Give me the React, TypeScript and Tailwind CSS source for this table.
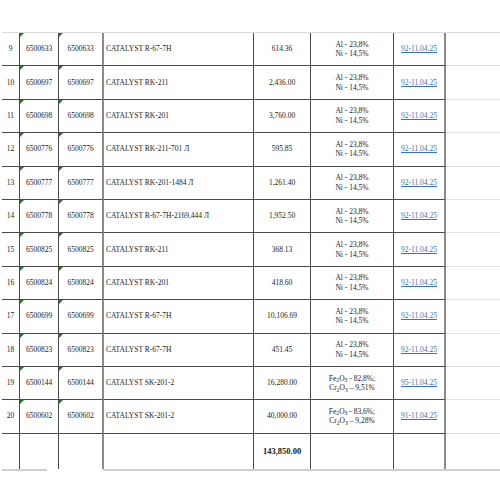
import React from 'react';

type Row = {
  n: number;
  code: string;
  name: string;
  amount: string;
  comp: 'ni' | 'fe1' | 'fe2';
  doc: string;
};

const rows: Row[] = [
  { n: 9, code: '6500633', name: 'CATALYST R-67-7H', amount: '614.36', comp: 'ni', doc: '92-11.04.25' },
  { n: 10, code: '6500697', name: 'CATALYST RK-211', amount: '2,436.00', comp: 'ni', doc: '92-11.04.25' },
  { n: 11, code: '6500698', name: 'CATALYST RK-201', amount: '3,760.00', comp: 'ni', doc: '92-11.04.25' },
  { n: 12, code: '6500776', name: 'CATALYST RK-211-701 Л', amount: '595.85', comp: 'ni', doc: '92-11.04.25' },
  { n: 13, code: '6500777', name: 'CATALYST RK-201-1484 Л', amount: '1,261.40', comp: 'ni', doc: '92-11.04.25' },
  { n: 14, code: '6500778', name: 'CATALYST R-67-7H-2169,444 Л', amount: '1,952.50', comp: 'ni', doc: '92-11.04.25' },
  { n: 15, code: '6500825', name: 'CATALYST RK-211', amount: '368.13', comp: 'ni', doc: '92-11.04.25' },
  { n: 16, code: '6500824', name: 'CATALYST RK-201', amount: '418.60', comp: 'ni', doc: '92-11.04.25' },
  { n: 17, code: '6500699', name: 'CATALYST R-67-7H', amount: '10,106.69', comp: 'ni', doc: '92-11.04.25' },
  { n: 18, code: '6500823', name: 'CATALYST R-67-7H', amount: '451.45', comp: 'ni', doc: '92-11.04.25' },
  { n: 19, code: '6500144', name: 'CATALYST SK-201-2', amount: '16,280.00', comp: 'fe1', doc: '95-11.04.25' },
  { n: 20, code: '6500602', name: 'CATALYST SK-201-2', amount: '40,000.00', comp: 'fe2', doc: '91-11.04.25' },
];

function Marker() {
  return (
    <span className="absolute left-0 top-0 w-0 h-0 border-t-[4px] border-r-[4px] border-t-[#217a21] border-r-transparent" />
  );
}

function Composition({ kind }: { kind: Row['comp'] }) {
  if (kind === 'ni') {
    return (
      <>
        <div>Al - 23,8%</div>
        <div>Ni - 14,5%</div>
      </>
    );
  }
  const fe = kind === 'fe1' ? '82,8%;' : '83,6%;';
  const cr = kind === 'fe1' ? '9,51%' : '9,28%';
  return (
    <>
      <div>
        Fe<sub>2</sub>O<sub>3</sub> - {fe}
      </div>
      <div>
        Cr<sub>2</sub>O<sub>3</sub> – {cr}
      </div>
    </>
  );
}

const cols = 'grid grid-cols-[18px_39px_45px_150px_57px_83px_52px_1fr]';

export default function App() {
  return (
    <div className="w-[500px] h-[500px] bg-white overflow-hidden text-[#1a1a1a] text-[7.5px] leading-[10px] font-['Liberation_Serif',serif]">
      <div className="h-[32px]" />
      <div className="ml-[2px] border-t border-[#dcdcdc]">
        {rows.map((r) => (
          <div key={r.n} className={`${cols} h-[33.4px]`}>
            <div className="flex items-center justify-center border-r border-b border-[#4a4a4a]">{r.n}</div>
            <div className="relative flex items-center justify-center border-r border-b border-[#4a4a4a]">
              <Marker />
              {r.code}
            </div>
            <div className="relative flex items-center justify-center border-r-2 border-r-[#8a8a8a] border-b border-b-[#4a4a4a]">
              <Marker />
              {r.code}
            </div>
            <div className="flex items-center pl-[2px] border-r border-b border-[#4a4a4a] whitespace-nowrap">{r.name}</div>
            <div className="flex items-center justify-center border-r border-b border-[#4a4a4a]">{r.amount}</div>
            <div className="flex flex-col items-center justify-center border-r border-b border-[#4a4a4a] leading-[9.5px]">
              <Composition kind={r.comp} />
            </div>
            <div className="flex items-center justify-center border-r-2 border-r-[#8a8a8a] border-b border-b-[#4a4a4a]">
              <span className="text-[#3d72b8] underline">{r.doc}</span>
            </div>
            <div className="border-b border-[#e3e3e3]" />
          </div>
        ))}
        <div className={`${cols} h-[35px]`}>
          <div className="border-r border-[#4a4a4a]" />
          <div className="border-r border-[#4a4a4a]" />
          <div className="border-r-2 border-[#8a8a8a]" />
          <div className="border-r border-[#4a4a4a]" />
          <div className="flex items-center justify-center border-r border-[#4a4a4a] text-[8.5px] font-bold">143,850.00</div>
          <div className="border-r border-[#4a4a4a]" />
          <div className="border-r-2 border-[#8a8a8a]" />
          <div />
        </div>
        <div className="flex h-[2px]">
          <div className="w-[45px] border-t-2 border-[#cfcfcf]" />
          <div className="w-[56px]" />
          <div className="flex-1 border-t-2 border-[#cfcfcf]" />
        </div>
      </div>
      <div className="mt-[30px] border-t-2 border-[#9a9a9a]" />
    </div>
  );
}
